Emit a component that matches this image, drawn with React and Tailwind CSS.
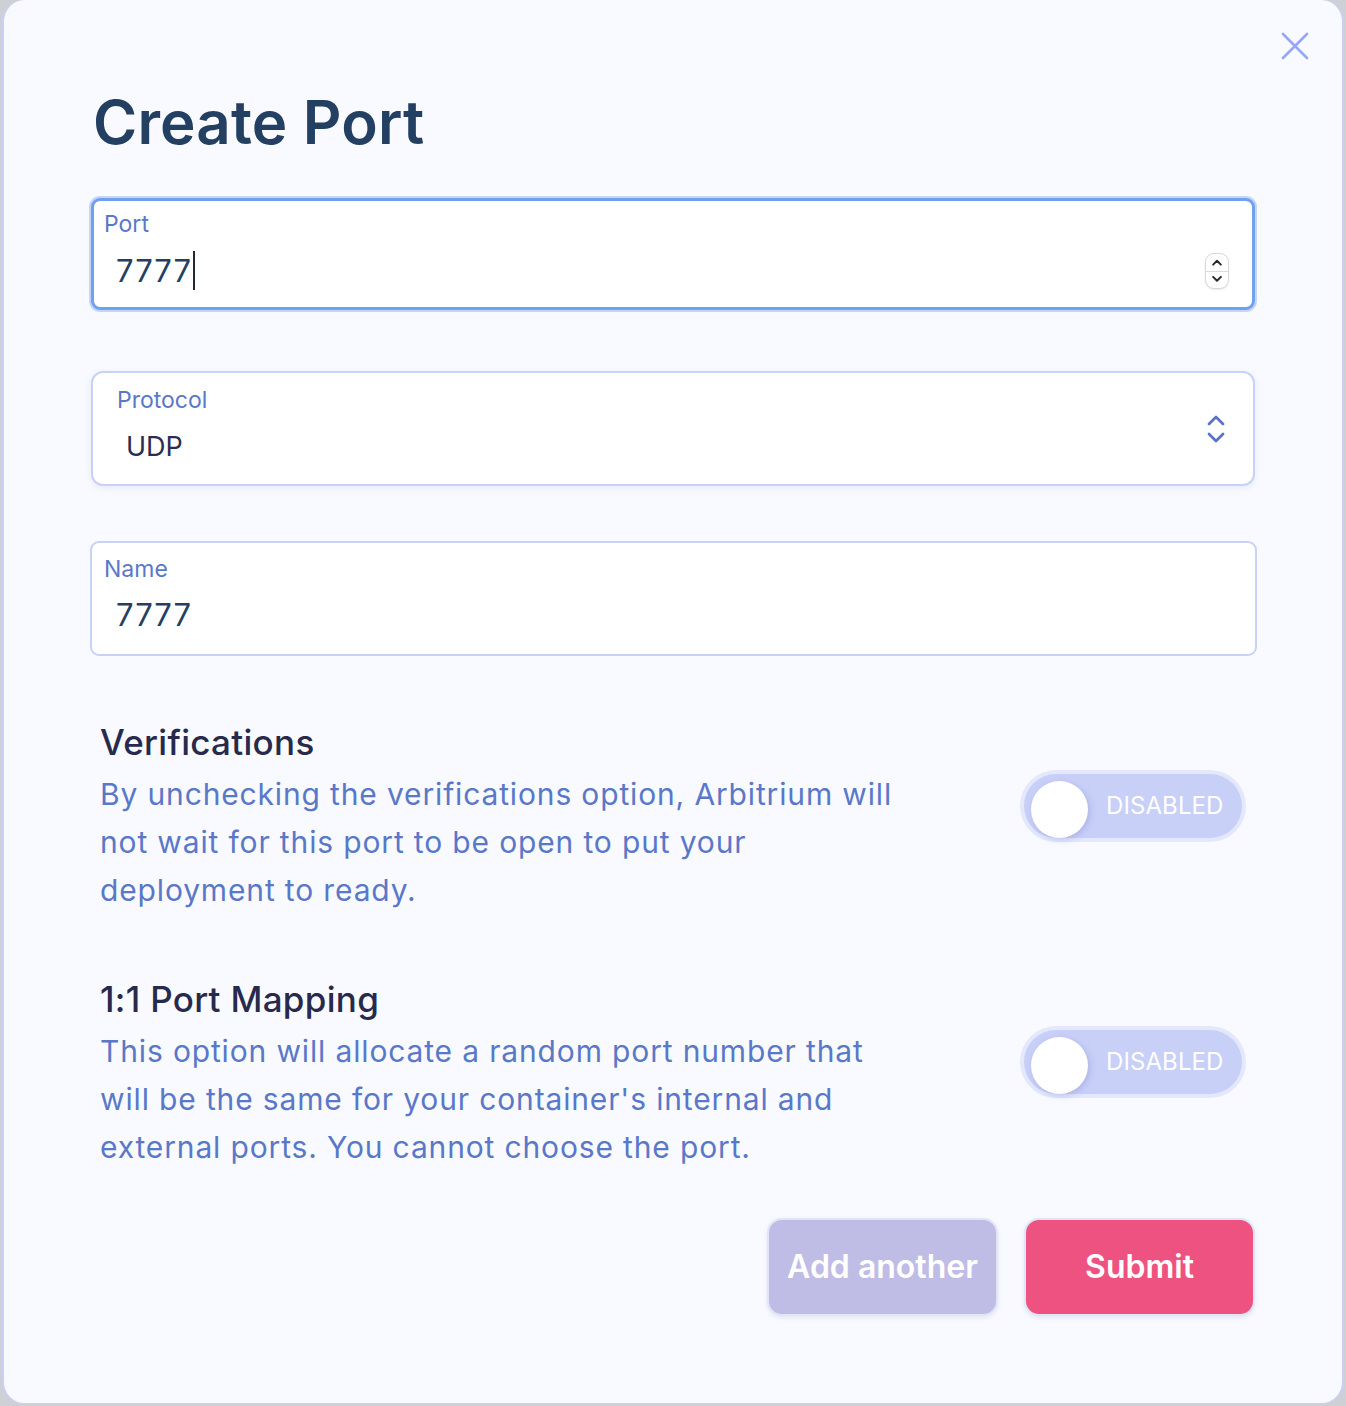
import React from "react";

function Toggle() {
  return (
    <div className="w-[226px] h-[72px] rounded-full bg-[#e3e8fc] p-[4px] shrink-0">
      <div className="relative w-full h-full rounded-full bg-[#c8d0f8] flex items-center">
        <div className="absolute left-[7px] top-[7px] w-[57px] h-[57px] rounded-full bg-white shadow-[2px_2px_6px_rgba(120,130,200,0.35)]" />
        <span className="ml-[82px] text-[24px] text-white tracking-[0.1px] leading-none">DISABLED</span>
      </div>
    </div>
  );
}

export default function App() {
  return (
    <div
      className="w-[1346px] h-[1406px] bg-[#cfd0d6] overflow-hidden"
      style={{ fontFamily: "Inter, 'Noto Sans', sans-serif" }}
    >
      <div className="relative ml-[2px] w-[1342px] h-[1404px] rounded-[22px] border-x-[2px] border-b-[1px] border-[#c9cff5] bg-[#f8faff]">
        {/* close */}
        <svg className="absolute left-[1276px] top-[31px]" width="30" height="30" viewBox="0 0 30 30">
          <path d="M3 3 L27 27 M27 3 L3 27" stroke="#95a8f1" strokeWidth="2.6" strokeLinecap="round" />
        </svg>

        <div className="pl-[85px] pr-[86px] flex flex-col">
          <h1 className="mt-[92px] ml-[4px] text-[60px] leading-[60px] font-semibold text-[#233f61] tracking-[0.2px]">
            Create Port
          </h1>

          {/* Port input */}
          <div className="mt-[46px] ml-[2px] w-[1164px] h-[112px] rounded-[9px] border-[3px] border-[#6fa2ee] bg-white shadow-[0_0_0_2px_#c6d4f6] relative">
            <div className="pl-[10px] pt-[9px] text-[23px] leading-[28px] text-[#5a78c8]">Port</div>
            <div className="pl-[22px] mt-[13px] flex items-center">
              <span className="text-[31px] leading-[34px] text-[#233f61] tracking-[1px]">7777</span>
              <span className="ml-[1px] w-[2px] h-[39px] bg-[#1f2937]" />
            </div>
            <div className="absolute left-[1111px] top-[52px] w-[24px] h-[36px] rounded-[9px] border border-[#d8d8d8] bg-white flex flex-col items-center shadow-[0_1px_2px_rgba(0,0,0,0.08)]">
              <svg width="14" height="17" viewBox="0 0 14 17">
                <path d="M3 11 L7 7 L11 11" stroke="#2a2a2a" strokeWidth="2" fill="none" strokeLinecap="round" strokeLinejoin="round" />
              </svg>
              <div className="w-full h-[1px] bg-[#dcdcdc]" />
              <svg width="14" height="17" viewBox="0 0 14 17">
                <path d="M3 6 L7 10 L11 6" stroke="#2a2a2a" strokeWidth="2" fill="none" strokeLinecap="round" strokeLinejoin="round" />
              </svg>
            </div>
          </div>

          {/* Protocol select */}
          <div className="mt-[61px] ml-[2px] w-[1164px] h-[115px] rounded-[12px] border-[2px] border-[#c8d1f8] bg-white shadow-[0_2px_6px_rgba(140,150,200,0.15)] flex items-center justify-between">
            <div className="flex flex-col mb-[9px]">
              <div className="pl-[24px] text-[23px] leading-[28px] text-[#5a78c8]">Protocol</div>
              <div className="pl-[33px] mt-[17px] text-[27px] leading-[32px] text-[#2b2d52]">UDP</div>
            </div>
            <svg className="mr-[26px]" width="22" height="32" viewBox="0 0 22 32">
              <path d="M4 11 L11 4 L18 11 M4 21 L11 28 L18 21" stroke="#5a72c6" strokeWidth="2.8" fill="none" strokeLinecap="round" strokeLinejoin="round" />
            </svg>
          </div>

          {/* Name input */}
          <div className="mt-[55px] ml-[1px] w-[1167px] h-[115px] rounded-[9px] border-[2px] border-[#c8d1f8] bg-white">
            <div className="pl-[12px] pt-[12px] text-[23px] leading-[28px] text-[#5a78c8]">Name</div>
            <div className="pl-[24px] mt-[15px] text-[31px] leading-[34px] text-[#233f61] tracking-[1px]">7777</div>
          </div>

          {/* Verifications */}
          <div className="mt-[64px] ml-[11px] flex items-start justify-between pr-[10px]">
            <div className="w-[805px]">
              <div className="text-[35px] leading-[44px] font-medium text-[#272a4c] tracking-[0.3px]">Verifications</div>
              <p className="mt-[6px] text-[30px] leading-[48px] text-[#5a78c8] tracking-[0.85px]">
                By unchecking the verifications option, Arbitrium will not wait for this port to be open to put your deployment to ready.
              </p>
            </div>
            <div className="mt-[50px]">
              <Toggle />
            </div>
          </div>

          {/* Port mapping */}
          <div className="mt-[63px] ml-[11px] flex items-start justify-between pr-[10px]">
            <div className="w-[805px]">
              <div className="text-[35px] leading-[44px] font-medium text-[#272a4c] tracking-[0.3px]">1:1 Port Mapping</div>
              <p className="mt-[6px] text-[30px] leading-[48px] text-[#5a78c8] tracking-[0.85px]">
                This option will allocate a random port number that will be the same for your container's internal and external ports. You cannot choose the port.
              </p>
            </div>
            <div className="mt-[49px]">
              <Toggle />
            </div>
          </div>

          {/* Buttons */}
          <div className="mt-[47px] flex justify-end gap-[26px] pr-[1px]">
            <button className="w-[231px] h-[98px] rounded-[15px] border-[2px] border-[#e1e4f8] bg-[#bfbce6] text-white text-[32px] font-semibold shadow-[0_2px_4px_rgba(120,120,180,0.15)]">
              Add another
            </button>
            <button className="w-[231px] h-[98px] rounded-[15px] border-[2px] border-[#e1e4f8] bg-[#ee5280] text-white text-[32px] font-semibold shadow-[0_2px_4px_rgba(120,120,180,0.15)]">
              Submit
            </button>
          </div>
        </div>
      </div>
    </div>
  );
}
